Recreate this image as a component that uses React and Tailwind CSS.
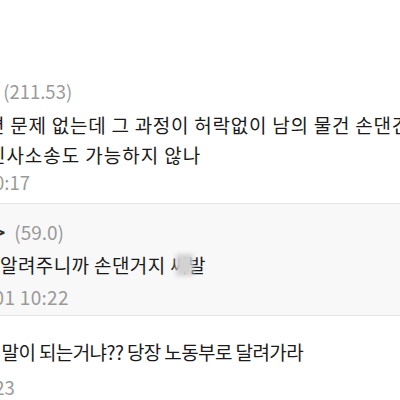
export default function App() {
  const font = { fontFamily: '"Noto Sans CJK KR", "Noto Sans", Roboto, sans-serif' };
  return (
    <div className="w-[400px] h-[400px] overflow-hidden bg-white text-[#1a1a1a]" style={font}>
      <div className="h-[77px]" />
      <div className="h-[30px] flex items-center whitespace-nowrap text-[18.5px] text-[#9a9a9a] -ml-[18px]">
        <span>님 (211.53)</span>
      </div>
      <div className="mt-[3px] text-[19px] leading-[30px] whitespace-nowrap">
        <div className="-ml-[13px] tracking-[0.75px]">면 문제 없는데 그 과정이 허락없이 남의 물건 손댄건</div>
        <div className="-ml-[12px] tracking-[0.95px]">민사소송도 가능하지 않나</div>
      </div>
      <div className="h-[26px] flex items-center whitespace-nowrap text-[18.5px] text-[#9a9a9a] -ml-[6px]">
        <span>0:17</span>
      </div>
      <div className="mt-[7px] h-[113px] bg-[#f8f8f8] border-y border-[#e6e6e6]">
        <div className="mt-[13px] h-[30px] flex items-center whitespace-nowrap text-[19px] text-[#9a9a9a] -ml-[6px]">
          <span className="text-[#333] font-bold">&gt;</span>
          <span className="ml-[9px]">(59.0)</span>
        </div>
        <div className="mt-[3px] h-[30px] leading-[30px] whitespace-nowrap text-[19px] tracking-[0.4px]">
          <span>
            알려주니까 손댄거지{" "}
            <span className="relative">
              씨발
              <span className="absolute left-[6px] top-[3px] w-[17px] h-[22px] bg-[#d2d2d2] blur-[2px]" />
            </span>
          </span>
        </div>
        <div className="mt-[4px] h-[26px] flex items-center whitespace-nowrap text-[19px] text-[#9a9a9a] tracking-[0.3px] -ml-[12px]">
          <span>.01 10:22</span>
        </div>
      </div>
      <div className="mt-[21px] h-[30px] leading-[30px] whitespace-nowrap text-[19px] tracking-[-0.6px] -ml-[19px]">
        게 말이 되는거냐?? 당장 노동부로 달려가라
      </div>
      <div className="mt-[8px] h-[26px] flex items-center whitespace-nowrap text-[18.5px] text-[#9a9a9a] -ml-[11px]">
        <span>:23</span>
      </div>
    </div>
  );
}
